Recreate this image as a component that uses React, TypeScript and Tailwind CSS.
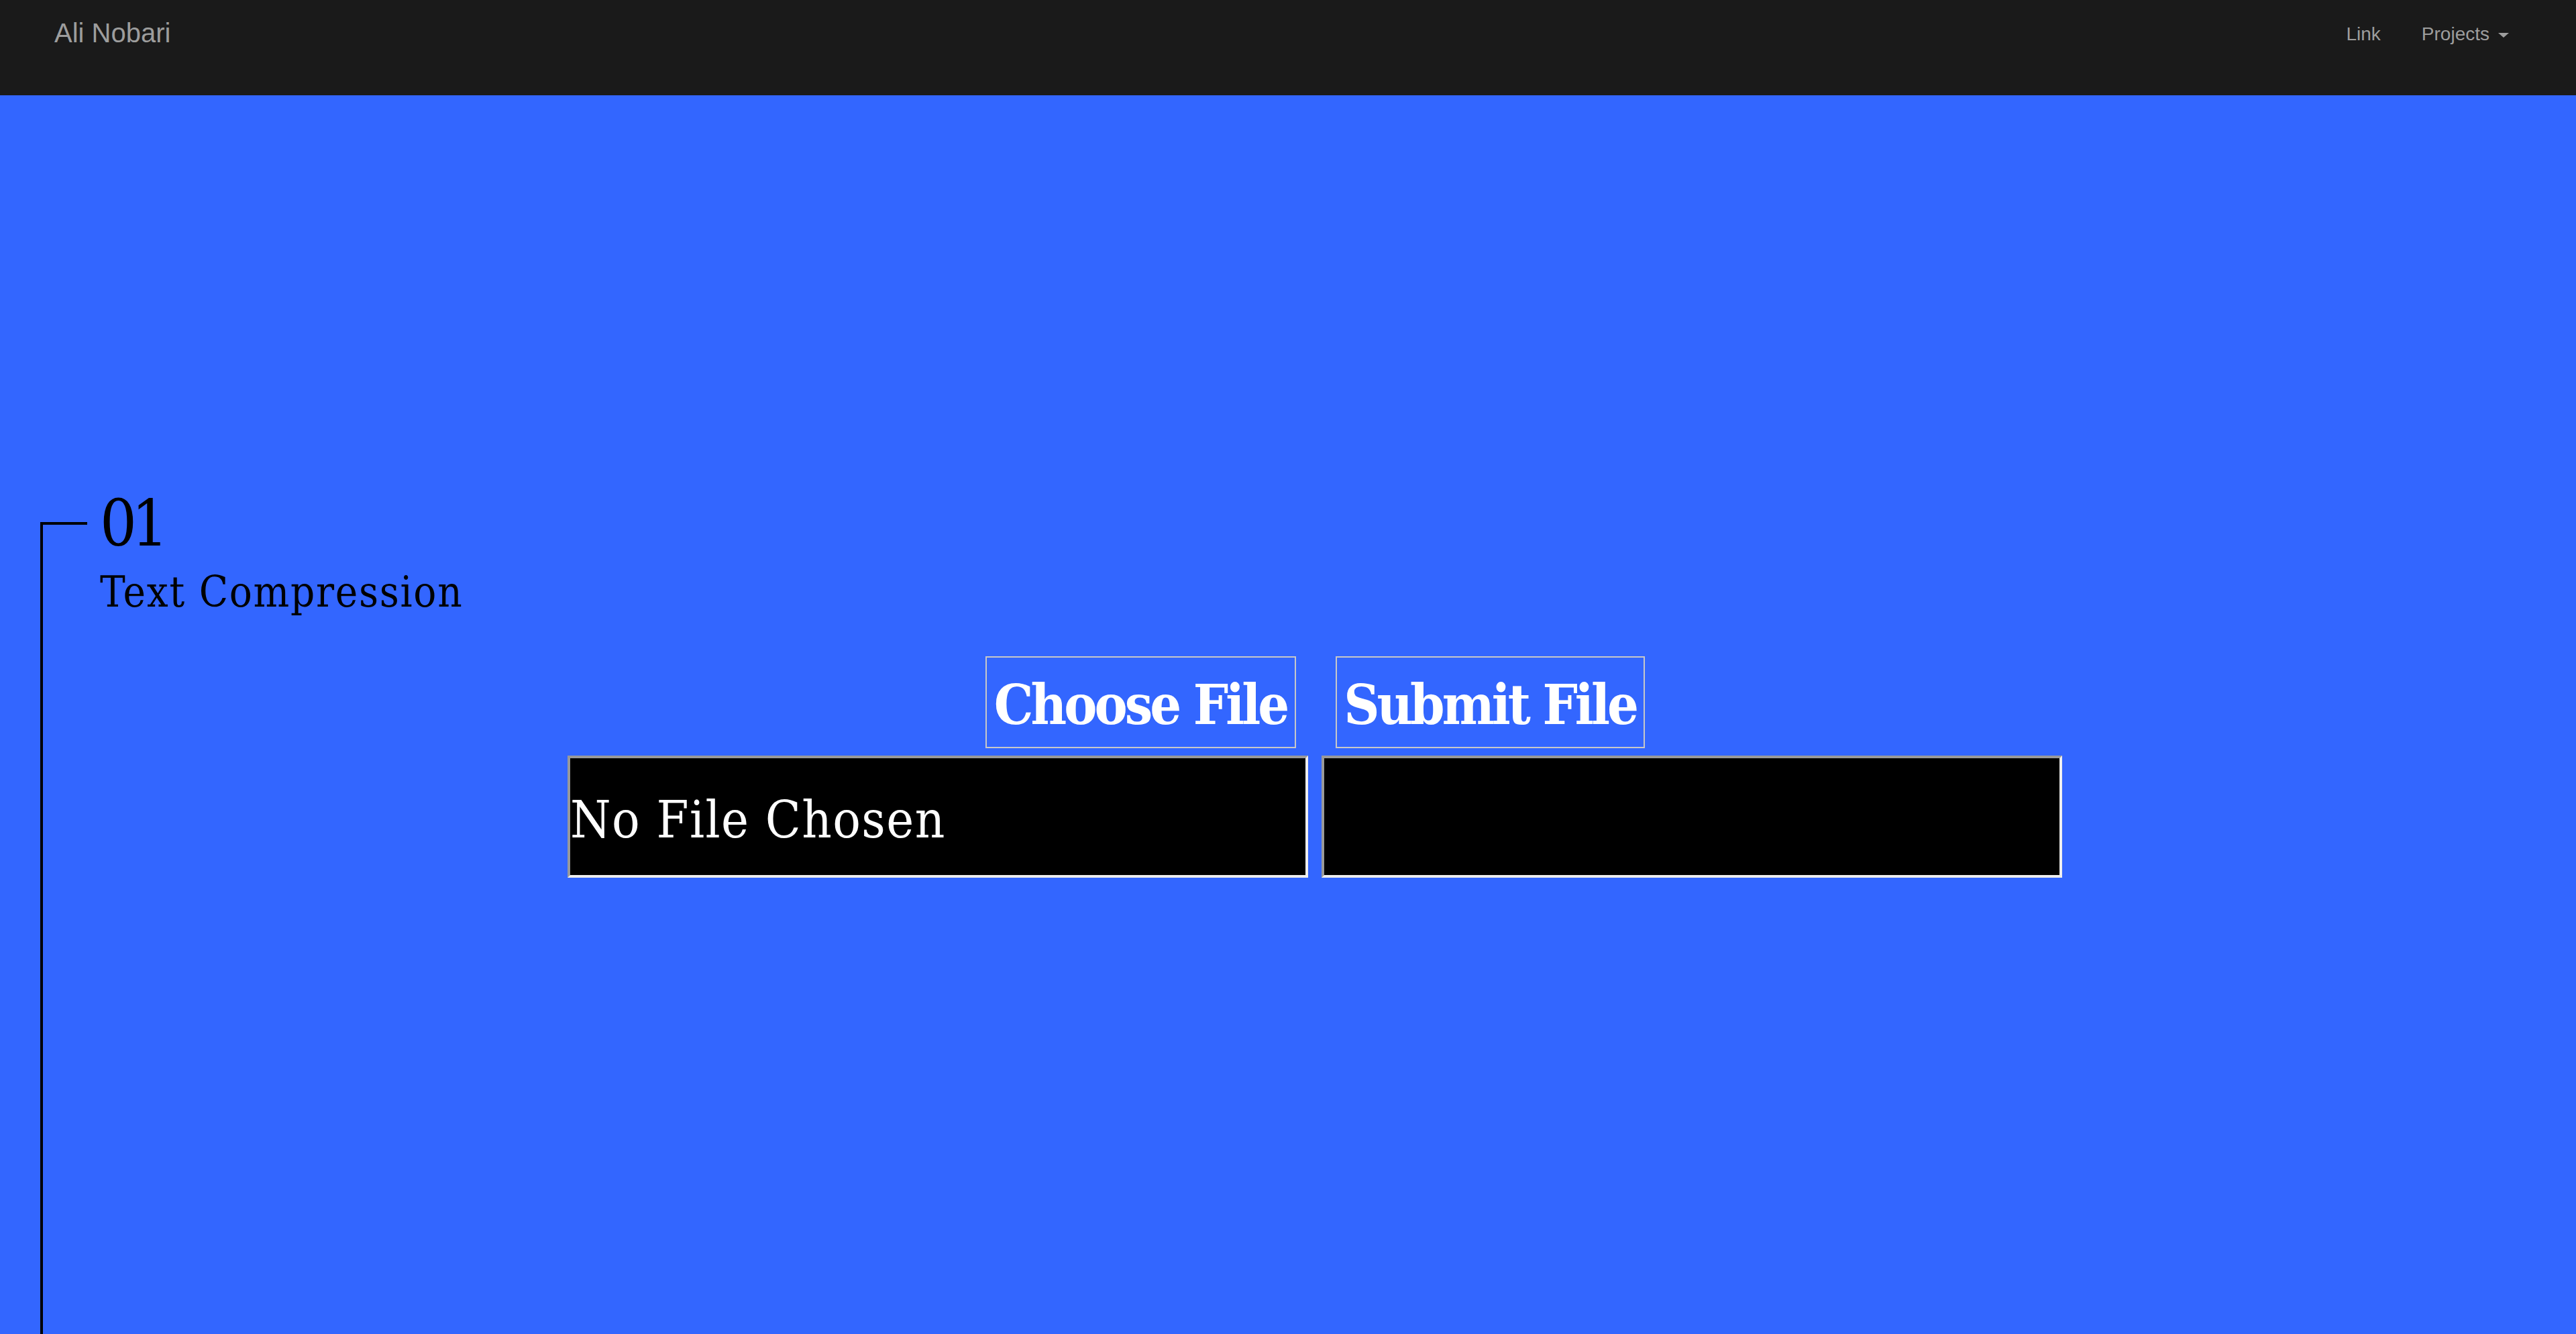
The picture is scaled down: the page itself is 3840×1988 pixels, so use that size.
export default function App() {
  return (
    <div className="flex min-h-screen flex-col bg-[#3366ff]">
      <nav className="flex h-[142px] shrink-0 items-start justify-between bg-[#1a1a1a] font-['Liberation_Sans',Arial,sans-serif] text-[#9d9d9d]">
        <a href="#" className="pl-[81px] pt-[29px] text-[40px] leading-none">
          Ali Nobari
        </a>
        <ul className="flex items-start gap-[61px] pr-[100px] pt-[37px] text-[28px] leading-none">
          <li>
            <a href="#">Link</a>
          </li>
          <li className="flex items-center">
            <a href="#">Projects</a>
            <span className="ml-[13px] mt-[2px] inline-block h-0 w-0 border-x-[8px] border-t-[7px] border-x-transparent border-t-[#9d9d9d]" />
          </li>
        </ul>
      </nav>

      <main className="flex flex-1 pt-[590px] font-['DejaVu_Serif',serif] [font-stretch:condensed]">
        <div className="ml-[60px] mt-[46px] w-[70px] shrink-0 border-l-4 border-t-4 border-black" />

        <section className="flex flex-1 flex-col pr-[50px]">
          <div className="pl-[19px] text-black">
            <h1 className="text-[96px] font-light leading-none tracking-[-8px]">01</h1>
            <h2 className="mt-[23px] text-[63px] font-light leading-none tracking-[1.7px]">
              Text Compression
            </h2>
          </div>

          <div className="mt-[64px] flex justify-center gap-[59px]">
            <button className="flex h-[137px] w-[463px] items-center justify-center whitespace-nowrap border-2 border-[#c8c8c8] pt-[6px] text-[82px] font-bold leading-none tracking-[-4px] text-white">
              Choose File
            </button>
            <button className="flex h-[137px] w-[461px] items-center justify-center whitespace-nowrap border-2 border-[#c8c8c8] pt-[6px] text-[82px] font-bold leading-none tracking-[-4px] text-white">
              Submit File
            </button>
          </div>

          <div className="mt-[11px] flex justify-center gap-[20px]">
            <div className="flex h-[182px] w-[1104px] items-center whitespace-nowrap border-4 border-b-[#eeeeee] border-l-[#999999] border-r-[#eeeeee] border-t-[#999999] bg-black pt-[8px] text-[77px] font-light leading-none tracking-[1.4px] text-white">
              No File Chosen
            </div>
            <div className="h-[182px] w-[1104px] border-4 border-b-[#eeeeee] border-l-[#999999] border-r-[#eeeeee] border-t-[#999999] bg-black" />
          </div>
        </section>
      </main>
    </div>
  );
}
